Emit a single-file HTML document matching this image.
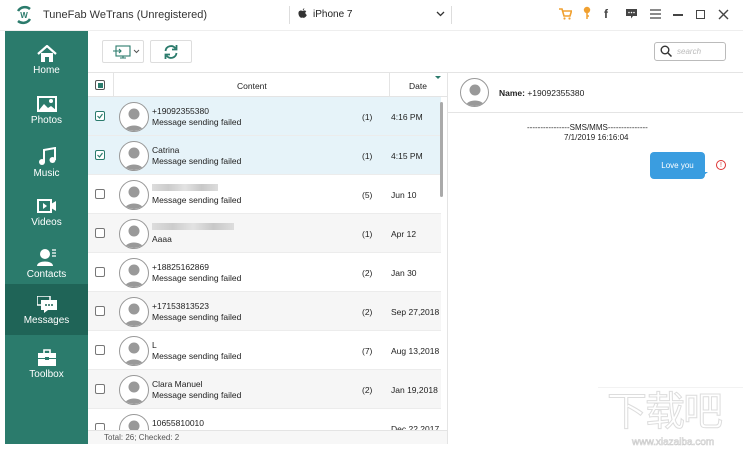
<!DOCTYPE html>
<html><head><meta charset="utf-8"><style>
*{margin:0;padding:0;box-sizing:border-box}
body{width:743px;height:452px;background:#fff;font-family:"Liberation Sans",sans-serif;position:relative;overflow:hidden;color:#222}
.abs{position:absolute}
.side{left:5px;top:31px;width:83px;height:413px;background:#2b7b6c}
.nav{position:absolute;left:0;width:83px;height:51px;text-align:center;color:#fff;font-size:10px}
.nav svg{display:block;margin:7px auto 2px}
.row{position:absolute;left:88px;width:353px;height:39px;border-bottom:1px solid #ececec}
.cb{position:absolute;left:7px;top:14px;width:10px;height:10px;border:1px solid #777;border-radius:2px;background:#fff}
.av{position:absolute;left:31px;top:5px;width:30px;height:30px;border-radius:50%;border:1px solid #999;background:#fff;overflow:hidden}
.t1{position:absolute;left:64px;top:9px;font-size:8.5px}
.t2{position:absolute;left:64px;top:20px;font-size:8.5px}
.cnt{position:absolute;left:274px;top:15px;font-size:8.5px}
.dt{position:absolute;left:303px;top:15px;font-size:8.5px}
.blur{position:absolute;left:64px;top:9px;height:7px;background:linear-gradient(90deg,#ddd,#ccc,#e3e3e3,#c8c8c8,#ddd)}
</style></head><body>
<svg class="abs" style="left:14px;top:5px" width="20" height="20" viewBox="0 0 20 20"><path d="M4 6a8 8 0 0 1 12-2M16 14a8 8 0 0 1-12 2" stroke="#2b7b6c" stroke-width="2.5" fill="none"/><text x="10" y="13" font-size="8" font-weight="bold" fill="#2b7b6c" text-anchor="middle" font-family="Liberation Sans">W</text></svg>
<div class="abs" style="left:43px;top:9px;font-size:11px;color:#333">TuneFab WeTrans (Unregistered)</div>
<div class="abs" style="left:289px;top:6px;width:1px;height:18px;background:#ddd"></div>
<svg class="abs" style="left:298px;top:8px" width="9" height="11" viewBox="0 0 9 11"><path d="M4.5 3C3 2 0 2.5 0.5 6 1 9 3 10.5 4.5 9.5 6 10.5 8 9 8.8 7 7 6 7 4 8.3 3.3 7 2 5.5 2.5 4.5 3Z M4.7 2.3C4.7 1 5.8 0.2 6.3 0.2 6.3 1.3 5.5 2.2 4.7 2.3Z" fill="#333"/></svg>
<div class="abs" style="left:313px;top:9px;font-size:10px">iPhone 7</div>
<svg class="abs" style="left:436px;top:11px" width="9" height="6"><path d="M1 1l3.5 3.5L8 1" stroke="#333" stroke-width="1.3" fill="none"/></svg>
<div class="abs" style="left:451px;top:6px;width:1px;height:18px;background:#ddd"></div>
<svg class="abs" style="left:559px;top:8px" width="13" height="12"><path d="M0 1h3l2 7h6l1.5-5H4" stroke="#f0a030" stroke-width="1.6" fill="none"/><circle cx="5.5" cy="10.5" r="1.1" fill="#f0a030"/><circle cx="10.5" cy="10.5" r="1.1" fill="#f0a030"/></svg>
<svg class="abs" style="left:583px;top:6px" width="8" height="14"><circle cx="4" cy="4" r="3.2" fill="#f0a030"/><path d="M4 7v6M4 10h2" stroke="#f0a030" stroke-width="1.5"/></svg>
<div class="abs" style="left:604px;top:7px;font-size:12px;color:#444;font-weight:bold">f</div>
<svg class="abs" style="left:626px;top:9px" width="11" height="10"><path d="M0 0h11v7H7l-2 2.5V7H0z" fill="#444"/><circle cx="3" cy="3.5" r=".8" fill="#fff"/><circle cx="5.5" cy="3.5" r=".8" fill="#fff"/><circle cx="8" cy="3.5" r=".8" fill="#fff"/></svg>
<svg class="abs" style="left:650px;top:9px" width="11" height="10"><path d="M0 1h11M0 5h11M0 9h11" stroke="#444" stroke-width="1.3"/></svg>
<div class="abs" style="left:673px;top:14px;width:10px;height:1.5px;background:#444"></div>
<div class="abs" style="left:696px;top:10px;width:9px;height:9px;border:1.5px solid #444"></div>
<svg class="abs" style="left:718px;top:9px" width="11" height="11"><path d="M1 1l9 9M10 1l-9 9" stroke="#444" stroke-width="1.4"/></svg>
<div class="abs" style="left:0;top:30px;width:743px;height:1px;background:#eee"></div>

<div class="abs side">
 <div class="nav" style="top:7px"><svg width="20" height="18" viewBox="0 0 20 18"><path d="M1 9L10 1l9 8" stroke="#fff" stroke-width="2.2" fill="none"/><path d="M4 8v9h4v-5h4v5h4V8" fill="#fff"/></svg>Home</div>
 <div class="nav" style="top:58px"><svg width="20" height="17" viewBox="0 0 20 17"><rect x="1" y="1" width="18" height="14" fill="none" stroke="#fff" stroke-width="2"/><path d="M2 14l5-6 4 4 3-2 5 4z" fill="#fff"/><circle cx="14" cy="5" r="2" fill="#fff"/></svg>Photos</div>
 <div class="nav" style="top:109px"><svg width="18" height="19" viewBox="0 0 18 19"><path d="M6 15V3l11-2v12" stroke="#fff" stroke-width="2" fill="none"/><circle cx="4" cy="15" r="3" fill="#fff"/><circle cx="14.5" cy="13" r="3" fill="#fff"/></svg>Music</div>
 <div class="nav" style="top:160px"><svg width="20" height="17" viewBox="0 0 20 17"><rect x="1" y="2" width="13" height="12" fill="none" stroke="#fff" stroke-width="2"/><path d="M6 5v6l4-3z" fill="#fff"/><path d="M14 6l5-3v10l-5-3z" fill="#fff"/></svg>Videos</div>
 <div class="nav" style="top:210px"><svg width="20" height="19" viewBox="0 0 20 19"><circle cx="8" cy="6" r="5" fill="#fff"/><path d="M0 18c0-6 16-6 16 0" fill="#fff"/><path d="M15 2h4M15 5h4M15 8h4" stroke="#fff" stroke-width="1.3"/></svg>Contacts</div>
 <div class="nav" style="top:253px;height:51px;background:#1f6457;padding-top:5px"><svg width="20" height="17" viewBox="0 0 20 17"><rect x="0" y="0" width="13" height="9" fill="none" stroke="#fff" stroke-width="1.5"/><path d="M4 4h16v10h-9l-4 3v-3H4z" fill="#fff"/><circle cx="9" cy="9" r="1" fill="#1f6457"/><circle cx="12" cy="9" r="1" fill="#1f6457"/><circle cx="15" cy="9" r="1" fill="#1f6457"/></svg>Messages</div>
 <div class="nav" style="top:311px"><svg width="20" height="18" viewBox="0 0 20 18"><path d="M7 4V1h6v3" stroke="#fff" stroke-width="1.6" fill="none"/><rect x="1" y="4" width="18" height="13" fill="#fff"/><rect x="8" y="8" width="4" height="3" fill="#2b7b6c"/><path d="M1 9.5h7M12 9.5h7" stroke="#2b7b6c" stroke-width="1"/></svg>Toolbox</div>
</div>

<div class="abs" style="left:102px;top:40px;width:42px;height:23px;border:1px solid #ddd;border-radius:2px"></div>
<svg class="abs" style="left:113px;top:44px" width="28" height="16"><rect x="3" y="2" width="14" height="10" fill="none" stroke="#2b7b6c" stroke-width="1.1"/><path d="M7 14h6M10 12v2M0 7h8M6 5l2 2-2 2" stroke="#2b7b6c" stroke-width="1.1" fill="none"/><path d="M21 6l2.5 2.5L26 6" stroke="#555" fill="none"/></svg>
<div class="abs" style="left:150px;top:40px;width:42px;height:23px;border:1px solid #ddd;border-radius:2px"></div>
<svg class="abs" style="left:163px;top:44px" width="16" height="16" viewBox="0 0 16 16"><path d="M2.5 7a5.5 5.5 0 0 1 10-2.5M13.5 9a5.5 5.5 0 0 1-10 2.5" stroke="#2b7b6c" stroke-width="1.8" fill="none"/><path d="M13.5 1v4.5H9M2.5 15v-4.5H7" stroke="#2b7b6c" stroke-width="1.8" fill="none"/></svg>
<div class="abs" style="left:654px;top:42px;width:72px;height:19px;border:1px solid #bbb;border-radius:3px"></div>
<svg class="abs" style="left:660px;top:45px" width="12" height="12"><circle cx="5" cy="5" r="3.8" stroke="#333" stroke-width="1.4" fill="none"/><path d="M8 8l3.5 3.5" stroke="#333" stroke-width="1.5"/></svg>
<div class="abs" style="left:677px;top:47px;font-size:8px;color:#bbb;font-style:italic">search</div>
<div class="abs" style="left:88px;top:72px;width:655px;height:1px;background:#e4e4e4"></div>

<div class="abs" style="left:88px;top:73px;width:359px;height:24px;background:#fff;border-bottom:1px solid #e4e4e4"></div>
<div class="abs" style="left:95px;top:80px;width:10px;height:10px;border:1px solid #555;border-radius:2px"><div style="margin:1.5px;width:5px;height:5px;background:#2b7b6c"></div></div>
<div class="abs" style="left:113px;top:73px;width:1px;height:24px;background:#e4e4e4"></div>
<div class="abs" style="left:237px;top:81px;font-size:8.5px">Content</div>
<div class="abs" style="left:389px;top:73px;width:1px;height:24px;background:#e4e4e4"></div>
<div class="abs" style="left:409px;top:81px;font-size:8.5px">Date</div>
<div class="abs" style="left:435px;top:76px;width:0;height:0;border-left:3px solid transparent;border-right:3px solid transparent;border-top:3px solid #2b7b6c"></div>
<div class="abs" style="left:447px;top:73px;width:1px;height:371px;background:#e4e4e4"></div>

<div class="row" style="top:97px;background:#e6f3f9"><div class="cb" style="border-color:#2b7b6c"><svg width="8" height="8" style="position:absolute;left:0;top:0"><path d="M1.5 4l2 2 3-4" stroke="#2b7b6c" stroke-width="1.2" fill="none"/></svg></div><div class="av"><svg width="30" height="30"><circle cx="14" cy="11" r="5.5" fill="#999"/><path d="M4 30c0-10 20-10 20 0" fill="#999"/></svg></div><div class="t1">+19092355380</div><div class="t2">Message sending failed</div><div class="cnt">(1)</div><div class="dt">4:16 PM</div></div>
<div class="row" style="top:136px;background:#e6f3f9"><div class="cb" style="border-color:#2b7b6c"><svg width="8" height="8" style="position:absolute;left:0;top:0"><path d="M1.5 4l2 2 3-4" stroke="#2b7b6c" stroke-width="1.2" fill="none"/></svg></div><div class="av"><svg width="30" height="30"><circle cx="14" cy="11" r="5.5" fill="#999"/><path d="M4 30c0-10 20-10 20 0" fill="#999"/></svg></div><div class="t1">Catrina</div><div class="t2">Message sending failed</div><div class="cnt">(1)</div><div class="dt">4:15 PM</div></div>
<div class="row" style="top:175px;background:#fff"><div class="cb"></div><div class="av"><svg width="30" height="30"><circle cx="14" cy="11" r="5.5" fill="#999"/><path d="M4 30c0-10 20-10 20 0" fill="#999"/></svg></div><div class="blur" style="width:66px"></div><div class="t2">Message sending failed</div><div class="cnt">(5)</div><div class="dt">Jun 10</div></div>
<div class="row" style="top:214px;background:#f6f6f6"><div class="cb"></div><div class="av"><svg width="30" height="30"><circle cx="14" cy="11" r="5.5" fill="#999"/><path d="M4 30c0-10 20-10 20 0" fill="#999"/></svg></div><div class="blur" style="width:82px"></div><div class="t2">Aaaa</div><div class="cnt">(1)</div><div class="dt">Apr 12</div></div>
<div class="row" style="top:253px;background:#fff"><div class="cb"></div><div class="av"><svg width="30" height="30"><circle cx="14" cy="11" r="5.5" fill="#999"/><path d="M4 30c0-10 20-10 20 0" fill="#999"/></svg></div><div class="t1">+18825162869</div><div class="t2">Message sending failed</div><div class="cnt">(2)</div><div class="dt">Jan 30</div></div>
<div class="row" style="top:292px;background:#f6f6f6"><div class="cb"></div><div class="av"><svg width="30" height="30"><circle cx="14" cy="11" r="5.5" fill="#999"/><path d="M4 30c0-10 20-10 20 0" fill="#999"/></svg></div><div class="t1">+17153813523</div><div class="t2">Message sending failed</div><div class="cnt">(2)</div><div class="dt">Sep 27,2018</div></div>
<div class="row" style="top:331px;background:#fff"><div class="cb"></div><div class="av"><svg width="30" height="30"><circle cx="14" cy="11" r="5.5" fill="#999"/><path d="M4 30c0-10 20-10 20 0" fill="#999"/></svg></div><div class="t1">L</div><div class="t2">Message sending failed</div><div class="cnt">(7)</div><div class="dt">Aug 13,2018</div></div>
<div class="row" style="top:370px;background:#f6f6f6"><div class="cb"></div><div class="av"><svg width="30" height="30"><circle cx="14" cy="11" r="5.5" fill="#999"/><path d="M4 30c0-10 20-10 20 0" fill="#999"/></svg></div><div class="t1">Clara Manuel</div><div class="t2">Message sending failed</div><div class="cnt">(2)</div><div class="dt">Jan 19,2018</div></div>
<div class="row" style="top:409px;height:21px;background:#fff;overflow:hidden;border:0"><div class="cb"></div><div class="av"><svg width="30" height="30"><circle cx="14" cy="11" r="5.5" fill="#999"/><path d="M4 30c0-10 20-10 20 0" fill="#999"/></svg></div><div class="t1">10655810010</div><div class="dt">Dec 22,2017</div></div>
<div class="abs" style="left:440px;top:102px;width:3px;height:95px;background:#aaa;border-radius:2px"></div>
<div class="abs" style="left:88px;top:430px;width:359px;height:14px;background:#f7f7f7;border-top:1px solid #e4e4e4"></div>
<div class="abs" style="left:104px;top:433px;font-size:8px;color:#555">Total: 26; Checked: 2</div>

<div class="abs" style="left:460px;top:78px;width:29px;height:29px;border-radius:50%;border:1px solid #999;overflow:hidden"><svg width="29" height="29"><circle cx="14" cy="11" r="5.5" fill="#999"/><path d="M4 29c0-10 20-10 20 0" fill="#999"/></svg></div>
<div class="abs" style="left:499px;top:88px;font-size:8.5px"><b>Name:</b> +19092355380</div>
<div class="abs" style="left:448px;top:112px;width:295px;height:1px;background:#e4e4e4"></div>
<div class="abs" style="left:527px;top:123px;font-size:8px">----------------SMS/MMS---------------</div>
<div class="abs" style="left:564px;top:133px;font-size:8px">7/1/2019 16:16:04</div>
<div class="abs" style="left:650px;top:152px;width:55px;height:27px;background:#3a9de0;border-radius:4px;color:#fff;font-size:8px;text-align:center;line-height:27px">Love you</div>
<div class="abs" style="left:700px;top:172px;width:0;height:0;border-left:8px solid #3a9de0;border-bottom:6px solid transparent"></div>
<div class="abs" style="left:716px;top:160px;width:10px;height:10px;border:1px solid #d33;border-radius:50%;color:#d33;font-size:7px;text-align:center;line-height:9px">!</div>

<div class="abs" style="left:598px;top:387px;width:145px;height:1px;background:#f2f2f2"></div>
<div class="abs" style="left:607px;top:388px;font-size:40px;font-family:'Noto Sans CJK SC',sans-serif;color:#fff;-webkit-text-stroke:1px #ddd;letter-spacing:-2px;line-height:40px">下载吧</div>
<div class="abs" style="left:632px;top:437px;font-size:10px;color:#fff;-webkit-text-stroke:0.6px #ccc">www.xiazaiba.com</div>
</body></html>
